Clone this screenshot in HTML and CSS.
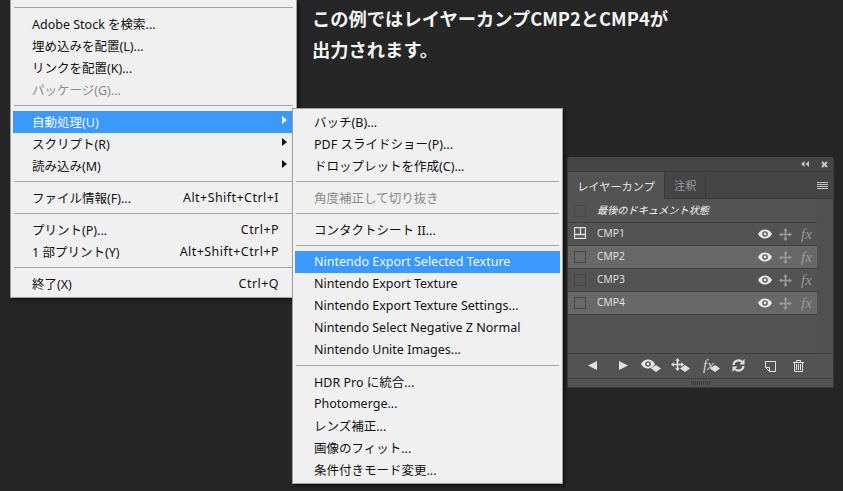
FILE: index.html
```html
<!DOCTYPE html>
<html lang="ja">
<head>
<meta charset="utf-8">
<title>レイヤーカンプ</title>
<link rel="stylesheet" href="styles.css">
</head>
<body>
<svg class="defs" width="0" height="0" aria-hidden="true">
  <symbol id="eye" viewBox="0 0 14 10"><path d="M0 5C2 1.600 4.500.5 7 .5s5 1.100 7 4.500C12 8.400 9.500 9.500 7 9.500S2 8.400 0 5z" fill="#e8e8e8"/><circle cx="7" cy="5" r="2.800" fill="#555"/><circle cx="7" cy="5" r="1.400" fill="#e8e8e8"/></symbol>
  <symbol id="move" viewBox="0 0 13 13"><path d="M6.500 0L8.800 2.800H7.300V5.700H10.200V4.200L13 6.500 10.200 8.800V7.300H7.300V10.200H8.800L6.500 13 4.200 10.200H5.700V7.300H2.800V8.800L0 6.500 2.800 4.200V5.700H5.700V2.800H4.200z"/></symbol>
  <symbol id="diamond" viewBox="0 0 10 7"><path d="M5 0L10 3.500 5 7 0 3.500z" fill="#e2e2e2"/></symbol>
</svg>

<h1 class="note">この例ではレイヤーカンプCMP2とCMP4が<br>出力されます。</h1>

<nav class="menu menu-main">
  <div class="sep"></div>
  <div class="item">Adobe Stock を検索...</div>
  <div class="item">埋め込みを配置(L)...</div>
  <div class="item">リンクを配置(K)...</div>
  <div class="item off">パッケージ(G)...</div>
  <div class="sep"></div>
  <div class="item sel sub">自動処理(U)</div>
  <div class="item sub">スクリプト(R)</div>
  <div class="item sub">読み込み(M)</div>
  <div class="sep"></div>
  <div class="item"><span>ファイル情報(F)...</span><span class="key">Alt+Shift+Ctrl+I</span></div>
  <div class="sep"></div>
  <div class="item"><span>プリント(P)...</span><span class="key">Ctrl+P</span></div>
  <div class="item"><span>1 部プリント(Y)</span><span class="key">Alt+Shift+Ctrl+P</span></div>
  <div class="sep"></div>
  <div class="item"><span>終了(X)</span><span class="key">Ctrl+Q</span></div>
</nav>

<nav class="menu menu-sub">
  <div class="item">バッチ(B)...</div>
  <div class="item">PDF スライドショー(P)...</div>
  <div class="item">ドロップレットを作成(C)...</div>
  <div class="sep"></div>
  <div class="item off">角度補正して切り抜き</div>
  <div class="sep"></div>
  <div class="item">コンタクトシート II...</div>
  <div class="sep"></div>
  <div class="item sel">Nintendo Export Selected Texture</div>
  <div class="item">Nintendo Export Texture</div>
  <div class="item">Nintendo Export Texture Settings...</div>
  <div class="item">Nintendo Select Negative Z Normal</div>
  <div class="item">Nintendo Unite Images...</div>
  <div class="sep"></div>
  <div class="item">HDR Pro に統合...</div>
  <div class="item">Photomerge...</div>
  <div class="item">レンズ補正...</div>
  <div class="item">画像のフィット...</div>
  <div class="item">条件付きモード変更...</div>
</nav>

<section class="panel">
  <header class="titlebar">
    <svg class="collapse" width="8" height="6" viewBox="0 0 8 6"><path d="M3.500 0V6L0 3zM8 0V6L4.500 3z" fill="#c8c8c8"/></svg>
    <svg class="close" width="7" height="7" viewBox="0 0 7 7"><path d="M1 1L6 6M6 1L1 6" stroke="#c8c8c8" stroke-width="2"/></svg>
  </header>
  <div class="tabs">
    <div class="tab active">レイヤーカンプ</div>
    <div class="tab">注釈</div>
    <svg class="burger" width="11" height="7" viewBox="0 0 11 7"><path d="M0 .5H11M0 2.500H11M0 4.500H11M0 6.500H11" stroke="#c4c4c4"/></svg>
  </div>
  <div class="body">
    <div class="list">
      <div class="row state"><i class="check"></i><span class="name">最後のドキュメント状態</span></div>
      <div class="row"><svg class="applied" width="12" height="12" viewBox="0 0 12 12"><path d="M.5.5H11.500V11.500H.5zM.5 7.500H11.500M6.500.5V7.500" fill="none" stroke="#e4e4e4" stroke-width="1.300"/></svg><span class="name">CMP1</span><svg class="ic-eye"><use href="#eye"/></svg><svg class="ic-move"><use href="#move"/></svg><em class="fx">fx</em></div>
      <div class="row on"><i class="check"></i><span class="name">CMP2</span><svg class="ic-eye"><use href="#eye"/></svg><svg class="ic-move"><use href="#move"/></svg><em class="fx">fx</em></div>
      <div class="row"><i class="check"></i><span class="name">CMP3</span><svg class="ic-eye"><use href="#eye"/></svg><svg class="ic-move"><use href="#move"/></svg><em class="fx">fx</em></div>
      <div class="row on"><i class="check"></i><span class="name">CMP4</span><svg class="ic-eye"><use href="#eye"/></svg><svg class="ic-move"><use href="#move"/></svg><em class="fx">fx</em></div>
    </div>
    <div class="scroll"></div>
  </div>
  <footer class="tools">
    <svg class="t t-prev" width="9" height="9" viewBox="0 0 9 10" preserveAspectRatio="none"><path d="M9 0V10L0 5z" fill="#e2e2e2"/></svg>
    <svg class="t t-next" width="9" height="9" viewBox="0 0 9 10" preserveAspectRatio="none"><path d="M0 0V10L9 5z" fill="#e2e2e2"/></svg>
    <span class="t t-combo t-c1"><svg class="ic-eye"><use href="#eye"/></svg><svg class="dia"><use href="#diamond"/></svg></span>
    <span class="t t-combo t-c2"><svg class="ic-move bright"><use href="#move"/></svg><svg class="dia"><use href="#diamond"/></svg></span>
    <span class="t t-combo t-c3"><em class="fx bright">fx</em><svg class="dia"><use href="#diamond"/></svg></span>
    <svg class="t t-sync" width="13" height="13" viewBox="0 0 13 13"><path d="M1.500 6A5 4.800 0 0 1 10 2.800M11.500 7A5 4.800 0 0 1 3 10.200" fill="none" stroke="#e2e2e2" stroke-width="2"/><path d="M12.500 0V5.500H7.500zM.5 13V7.500H5.500z" fill="#e2e2e2"/></svg>
    <svg class="t t-new" width="11" height="11" viewBox="0 0 11 11"><path d="M.5.500H10.500V10.500H4.500L.5 6.500z" fill="none" stroke="#e2e2e2"/><path d="M.5 6.500H4.500V10.500" fill="none" stroke="#e2e2e2"/></svg>
    <svg class="t t-trash" width="11" height="12" viewBox="0 0 11 12"><path d="M0 2.500H11M3.500 2.500V.5H7.500V2.500M1.500 2.500V11.500H9.500V2.500M3.500 4V10M5.500 4V10M7.500 4V10" fill="none" stroke="#e2e2e2"/></svg>
  </footer>
  <div class="grip"><i></i></div>
</section>
</body>
</html>
```

FILE: styles.css
```css
html, body {
  margin: 0;
  height: 100%;
  overflow: hidden;
}
body {
  position: relative;
  background: #262626;
  font-family: "Noto Sans", "Noto Sans CJK JP", sans-serif;
}
.defs { position: absolute; }

.note {
  margin: 0;
  padding: 3px 0 0 312px;
  color: #f4f4f4;
  font: 700 18.3px/31px "Noto Sans CJK JP", sans-serif;
}

.menu {
  position: absolute;
  box-sizing: border-box;
  background: #f0f0f0;
  border: 1px solid #a0a0a0;
  box-shadow: 2px 2px 3px rgba(0, 0, 0, .55);
  padding: 2px;
  color: #111;
  font-size: 12.5px;
}
.menu-main {
  left: 10px;
  top: 0;
  width: 287px;
  height: 298px;
  padding-top: 3px;
  border-top: 0;
}
.menu-sub {
  left: 292px;
  top: 108px;
  width: 271px;
  height: 376px;
}
.item {
  display: flex;
  justify-content: space-between;
  align-items: center;
  box-sizing: border-box;
  height: 22px;
  padding: 0 15px 2px 19px;
  white-space: nowrap;
}
.key { letter-spacing: .45px; }
.off { color: #8a8a8a; }
.sel { background: #3b99fc; color: #f4f8ff; }
.sub { position: relative; }
.sub::after {
  content: "";
  position: absolute;
  right: 7px;
  top: 5px;
  border-left: 5px solid #111;
  border-top: 4px solid transparent;
  border-bottom: 4px solid transparent;
}
.sel.sub::after { border-left-color: #f4f8ff; }
.sep {
  height: 1px;
  margin: 4px 1px 5px;
  background: #a5a5a5;
}

.panel {
  position: absolute;
  left: 567px;
  top: 157px;
  box-sizing: border-box;
  width: 267px;
  height: 231px;
  display: flex;
  flex-direction: column;
  background: #535353;
  border: 1px solid #393939;
  border-top: 0;
  border-radius: 3px 3px 0 0;
  color: #e4e4e4;
  font-size: 11px;
}
.titlebar {
  flex: none;
  display: flex;
  justify-content: flex-end;
  align-items: center;
  gap: 12px;
  height: 14px;
  padding-right: 5px;
  background: #454545;
  border-radius: 3px 3px 0 0;
}
.tabs {
  flex: none;
  display: flex;
  align-items: stretch;
  box-sizing: border-box;
  height: 28px;
  background: #454545;
  border-top: 1px solid #3a3a3a;
  border-bottom: 1px solid #3a3a3a;
  font: 11.2px "Noto Sans CJK JP", sans-serif;
}
.tab {
  display: flex;
  align-items: center;
  padding: 0 9px;
  color: #9a9a9a;
  border-right: 1px solid #3a3a3a;
}
.tab.active {
  width: 97px;
  box-sizing: border-box;
  justify-content: center;
  background: #535353;
  color: #e8e8e8;
  margin-bottom: -1px;
}
.burger { margin: auto 5px auto auto; }

.body {
  display: flex;
  flex: 1;
  min-height: 0;
}
.list { width: 249px; }
.scroll { flex: 1; background: #505050; }
.row {
  display: flex;
  align-items: center;
  box-sizing: border-box;
  height: 23px;
  padding-left: 6px;
  border-bottom: 1px solid #3f3f3f;
}
.row.on { background: #686868; }
.row.state { height: 24px; }
.check {
  box-sizing: border-box;
  width: 12px;
  height: 12px;
  border: 1px solid #474747;
}
.applied { flex: none; margin-bottom: 2px; }
.name {
  margin: 0 auto 2px 11px;
  font: 10.3px "Open Sans", sans-serif;
}
.state .name {
  font: italic 10.2px "Noto Sans CJK JP", sans-serif;
  color: #f5f5f5;
}
.ic-eye { width: 14px; height: 10px; }
.ic-move { width: 13px; height: 13px; margin-left: 7px; fill: #9a9a9a; }
.fx {
  width: 13px;
  margin: 0 3px 0 9px;
  font: italic 15px/1 "Liberation Serif", serif;
  color: #989898;
}

.tools {
  position: relative;
  flex: none;
  box-sizing: border-box;
  height: 26px;
  border-top: 1px solid #3f3f3f;
  border-bottom: 1px solid #3f3f3f;
}
.t { position: absolute; top: 7px; }
.t-prev { left: 20px; }
.t-next { left: 51px; }
.t-combo { display: flex; height: 14px; }
.t-c1 { left: 73px; top: 5px; }
.t-c2 { left: 103px; top: 4px; }
.t-c3 { left: 135px; top: 4px; }
.t-sync { left: 164px; top: 5px; }
.t-new { left: 197px; top: 7px; }
.t-trash { left: 225px; top: 6px; }
.t-combo .ic-move { margin-left: 0; }
.t-combo .fx { margin: 0; width: 8px; }
.bright { fill: #e2e2e2; color: #d8d8d8; }
.dia {
  position: absolute;
  left: 10px;
  top: 6px;
  width: 10px;
  height: 7px;
}
.t-c2 .dia { left: 9px; top: 7px; }
.t-c3 .dia { left: 7px; top: 7px; }

.grip {
  flex: none;
  height: 8px;
  display: flex;
  justify-content: center;
  align-items: center;
}
.grip i {
  width: 19px;
  height: 4px;
  background: repeating-linear-gradient(90deg, #3c3c3c 0 1px, transparent 1px 2px);
}
```
